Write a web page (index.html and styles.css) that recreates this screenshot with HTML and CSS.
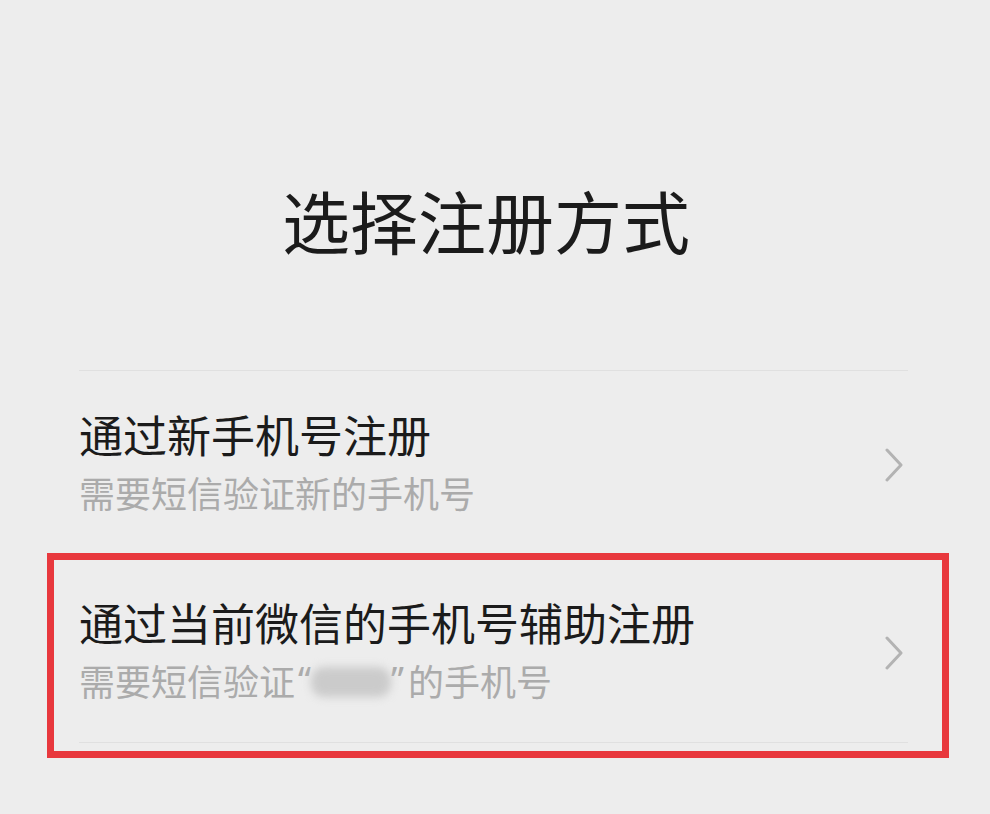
FILE: index.html
```html
<!DOCTYPE html>
<html lang="zh-CN">
<head>
<meta charset="utf-8">
<title>选择注册方式</title>
<link rel="stylesheet" href="styles.css">
</head>
<body>
<main class="page">
  <header class="header">
    <h1 class="title">选择注册方式</h1>
  </header>
  <div class="list">
    <div class="divider"></div>
    <div class="item item-first">
      <div class="item-text">
        <div class="item-title">通过新手机号注册</div>
        <div class="item-sub">需要短信验证新的手机号</div>
      </div>
      <svg class="chevron" width="20" height="34" viewBox="0 0 20 34"><polyline points="3,2 17,17 3,32" fill="none" stroke="#b3b3b3" stroke-width="3" stroke-linecap="round" stroke-linejoin="round"/></svg>
    </div>
    <div class="highlight">
      <div class="item item-second">
        <div class="item-text">
          <div class="item-title">通过当前微信的手机号辅助注册</div>
          <div class="item-sub">需要短信验证<span class="quote quote-open">“</span><span class="masked"></span><span class="quote quote-close">”</span>的手机号</div>
        </div>
        <svg class="chevron" width="20" height="34" viewBox="0 0 20 34"><polyline points="3,2 17,17 3,32" fill="none" stroke="#b3b3b3" stroke-width="3" stroke-linecap="round" stroke-linejoin="round"/></svg>
      </div>
      <div class="divider"></div>
    </div>
  </div>
</main>
</body>
</html>
```

FILE: styles.css
```css
html, body {
  margin: 0;
  padding: 0;
  background: #ededed;
}
body {
  font-family: "Noto Sans CJK SC", "Noto Sans", sans-serif;
  color: #1b1b1b;
  width: 990px;
  height: 814px;
  overflow: hidden;
}
.page {
  display: flex;
  flex-direction: column;
}
.header {
  padding: 186px 98px 0 80px;
  height: 184px;
}
.title {
  margin: 0;
  font-size: 68px;
  font-weight: 400;
  line-height: 68px;
  text-align: center;
  color: #1b1b1b;
}
.list {
  display: flex;
  flex-direction: column;
  padding: 0 82px 0 79px;
}
.divider {
  height: 1px;
  background: #e0e0e0;
}
.item {
  display: flex;
  align-items: center;
  justify-content: space-between;
}
.item-first {
  padding: 35px 0 31px;
}
.item-text {
  display: flex;
  flex-direction: column;
}
.item-title {
  font-size: 44px;
  line-height: 56px;
  color: #1b1b1b;
  white-space: nowrap;
}
.item-sub {
  font-size: 36px;
  line-height: 60px;
  color: #ababab;
  white-space: nowrap;
  display: flex;
  align-items: center;
}
.quote {
  font-family: "Noto Sans", "DejaVu Sans", sans-serif;
  font-size: 36px;
}
.quote-open {
  margin-left: 3px;
}
.quote-close {
  margin-right: 4px;
}
.chevron {
  margin-right: 4px;
  flex: none;
}
.item-first .chevron {
  margin-top: 2px;
}
.item-second .chevron {
  margin-top: 2px;
}
.highlight {
  margin: 0 -41px 0 -32px;
  border: 7px solid #e8383d;
  padding: 0 34px 8px 25px;
  display: flex;
  flex-direction: column;
}
.item-second {
  padding: 34px 0 32px;
}
.masked {
  display: inline-block;
  width: 80px;
  height: 30px;
  margin: 4px 0 0;
  border-radius: 13px;
  background: #cbcbcb;
  filter: blur(4px);
}
```
